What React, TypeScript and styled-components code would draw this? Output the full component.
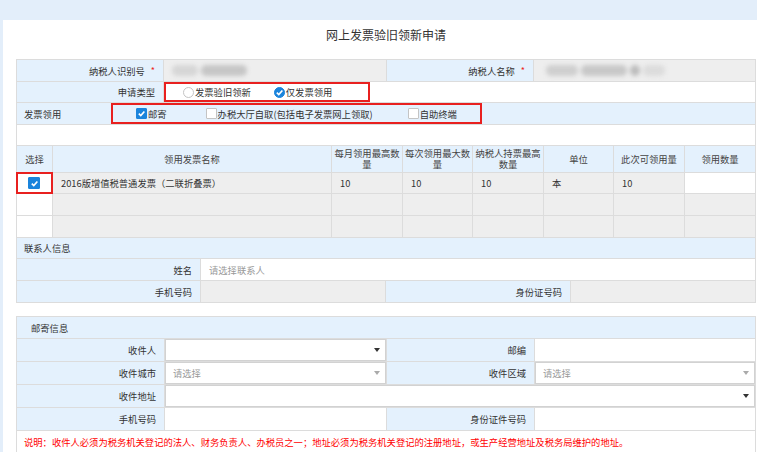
import React from 'react'
import styled, { createGlobalStyle } from 'styled-components'

const GlobalStyle = createGlobalStyle`
  html, body {
    margin: 0;
    padding: 0;
    background: #e3eefa;
    font-family: "Noto Sans CJK SC", "Liberation Sans", sans-serif;
    font-size: 9.3px;
    color: #333;
  }
`

const Page = styled.div`
  margin: 20px 0 0 3px;
  background: #fff;
  padding: 0 1px 0 13px;
  min-height: 432px;
`

const Title = styled.div`
  height: 39px;
  line-height: 30px;
  text-align: center;
  font-size: 12px;
  color: #333;
`

// a bordered block of cells; the 1px gaps on the grey background draw the cell lines
const Section = styled.div<{ $cols: string; $rows: string; $top?: boolean; $gap?: number }>`
  display: grid;
  grid-template-columns: ${p => p.$cols};
  grid-template-rows: ${p => p.$rows};
  gap: 1px;
  background: #dcdcdc;
  border: 1px solid #dcdcdc;
  border-top-width: ${p => (p.$top ? 1 : 0)}px;
  margin-top: ${p => p.$gap || 0}px;
  box-sizing: border-box;
`

const Label = styled.div<{ $left?: boolean; $pad?: number; $span?: number }>`
  grid-column: span ${p => p.$span || 1};
  background: #e4f1fd;
  display: flex;
  align-items: center;
  justify-content: ${p => (p.$left ? 'flex-start' : 'flex-end')};
  padding: 0 ${p => (p.$left ? 0 : p.$pad ?? 8)}px 0 ${p => (p.$left ? p.$pad ?? 7 : 0)}px;
  white-space: nowrap;
`

const Star = styled.span`
  color: #e22;
  margin-left: 6px;
  font-size: 9px;
`

const Value = styled.div<{ $grey?: boolean; $span?: number }>`
  grid-column: span ${p => p.$span || 1};
  background: ${p => (p.$grey ? '#eeeeee' : '#fff')};
  display: flex;
  align-items: center;
  padding-left: 8px;
  white-space: nowrap;
  overflow: hidden;
`

const Head = styled.div`
  background: #e4f1fd;
  display: flex;
  align-items: center;
  justify-content: center;
  text-align: center;
  line-height: 11px;
  color: #444;
`

const Blur = styled.div<{ $ml?: number }>`
  display: flex;
  gap: 3px;
  align-items: center;
  margin-left: ${p => p.$ml || 0}px;
  filter: blur(2px);
`

const Smudge = styled.span<{ $w: number; $c?: string }>`
  display: inline-block;
  width: ${p => p.$w}px;
  height: 11px;
  background: ${p => p.$c || '#c8c8c8'};
  border-radius: 5px;
`

const RedBox = styled.div<{ $w: number; $ml?: number }>`
  display: flex;
  align-items: center;
  box-sizing: border-box;
  width: ${p => p.$w}px;
  height: 100%;
  margin-left: ${p => p.$ml || 0}px;
  border: 2px solid #e8201f;
`

const Option = styled.label<{ $ml: number }>`
  display: inline-flex;
  align-items: center;
  margin-left: ${p => p.$ml}px;
  color: #333;
`

const Box = styled.span<{ $checked?: boolean; $round?: boolean; $size?: number }>`
  display: inline-flex;
  align-items: center;
  justify-content: center;
  box-sizing: border-box;
  width: ${p => p.$size || 11}px;
  height: ${p => p.$size || 11}px;
  border-radius: ${p => (p.$round ? '50%' : '1px')};
  background: ${p => (p.$checked ? '#1a84dc' : '#fff')};
  border: 1px solid ${p => (p.$checked ? '#1a84dc' : '#c4c4c4')};
  margin-right: 1px;
`

const Check = ({ checked, round, size }: { checked?: boolean; round?: boolean; size?: number }) => (
  <Box $checked={checked} $round={round} $size={size}>
    {checked && (
      <svg width="9" height="9" viewBox="0 0 10 10">
        <path d="M2 5.2 L4.2 7.3 L8.2 2.8" stroke="#fff" strokeWidth="1.8" fill="none" />
      </svg>
    )}
  </Box>
)

const RowTitle = styled.span`
  width: 87px;
`

const PlainRow = styled.div`
  grid-column: 1 / -1;
  background: #fff;
`

const PickCell = styled.div<{ $marked?: boolean }>`
  background: #fff;
  display: flex;
  align-items: center;
  justify-content: center;
  outline: ${p => (p.$marked ? '2px solid #e8201f' : 'none')};
  outline-offset: -1px;
`

const Select = styled.div<{ $span?: number; $placeholder?: boolean }>`
  grid-column: span ${p => p.$span || 1};
  background: #fff;
  box-shadow: inset 0 0 0 1px #d2d2d2;
  display: flex;
  align-items: center;
  justify-content: space-between;
  padding: 0 6px 0 8px;
  color: ${p => (p.$placeholder ? '#999' : '#333')};
`

const Arrow = styled.span<{ $light?: boolean }>`
  width: 0;
  height: 0;
  border-left: 3px solid transparent;
  border-right: 3px solid transparent;
  border-top: 4px solid ${p => (p.$light ? '#aaa' : '#333')};
`

const Placeholder = styled.span`
  color: #999;
`

const Note = styled.div`
  grid-column: 1 / -1;
  background: #fff;
  color: #f00;
  display: flex;
  align-items: center;
  padding-left: 7px;
  white-space: nowrap;
`

const heads = ['选择', '领用发票名称', '每月领用最高数量', '每次领用最大数量', '纳税人持票最高数量', '单位', '此次可领用量', '领用数量']

const invoiceRows = [
  { name: '2016版增值税普通发票（二联折叠票）', month: '10', each: '10', hold: '10', unit: '本', can: '10' },
  null,
  null,
]

export default function App() {
  return (
    <>
      <GlobalStyle />
      <Page>
        <Title>网上发票验旧领新申请</Title>

        <Section $top $cols="146px 222px 146px 221px" $rows="21px 20px 21px 20px">
          <Label>纳税人识别号<Star>*</Star></Label>
          <Value $grey>
            <Blur>
              <Smudge $w={26} $c="#d6d6d6" />
              <Smudge $w={46} $c="#c6c6c6" />
            </Blur>
          </Value>
          <Label>纳税人名称<Star>*</Star></Label>
          <Value $grey>
            <Blur $ml={4}>
              <Smudge $w={32} $c="#cfcfcf" />
              <Smudge $w={46} $c="#c8c8c8" />
              <Smudge $w={10} $c="#bdbdbd" />
              <Smudge $w={22} $c="#dcdcdc" />
            </Blur>
          </Value>

          <Label>申请类型</Label>
          <Value $span={3} style={{ paddingLeft: 0 }}>
            <RedBox $w={206}>
              <Option $ml={17}><Check round />发票验旧领新</Option>
              <Option $ml={23}><Check round checked />仅发票领用</Option>
            </RedBox>
          </Value>

          <Label $span={4} $left>
            <RowTitle>发票领用</RowTitle>
            <RedBox $w={371}>
              <Option $ml={23}><Check checked />邮寄</Option>
              <Option $ml={39}><Check />办税大厅自取(包括电子发票网上领取)</Option>
              <Option $ml={35}><Check />自助终端</Option>
            </RedBox>
          </Label>

          <PlainRow />
        </Section>

        <Section $cols="35px 278px 70px 69px 70px 69px 70px 70px" $rows="26px 20px 21px 21px">
          {heads.map(h => (
            <Head key={h}>{h}</Head>
          ))}
          {invoiceRows.map((r, i) => (
            <React.Fragment key={i}>
              <PickCell $marked={!!r}>{r && <Check checked size={12} />}</PickCell>
              <Value $grey>{r?.name}</Value>
              <Value $grey>{r?.month}</Value>
              <Value $grey>{r?.each}</Value>
              <Value $grey>{r?.hold}</Value>
              <Value $grey>{r?.unit}</Value>
              <Value $grey>{r?.can}</Value>
              <Value $grey={!r} />
            </React.Fragment>
          ))}
        </Section>

        <Section $cols="183px 184px 184px 184px" $rows="20px 21px 21px">
          <Label $span={4} $left>联系人信息</Label>
          <Label>姓名</Label>
          <Value $span={3}><Placeholder>请选择联系人</Placeholder></Value>
          <Label>手机号码</Label>
          <Value $grey />
          <Label>身份证号码</Label>
          <Value $grey />
        </Section>

        <Section $top $gap={13} $cols="147px 221px 147px 220px" $rows="21px 22px 22px 22px 22px 21px">
          <Label $span={4} $left $pad={14}>邮寄信息</Label>

          <Label>收件人</Label>
          <Select><span /><Arrow /></Select>
          <Label>邮编</Label>
          <Value />

          <Label>收件城市</Label>
          <Select $placeholder>请选择<Arrow $light /></Select>
          <Label>收件区域</Label>
          <Select $placeholder>请选择<Arrow $light /></Select>

          <Label>收件地址</Label>
          <Select $span={3}><span /><Arrow /></Select>

          <Label>手机号码</Label>
          <Value />
          <Label>身份证件号码</Label>
          <Value />

          <Note>
            说明：收件人必须为税务机关登记的法人、财务负责人、办税员之一；地址必须为税务机关登记的注册地址，或生产经营地址及税务局维护的地址。
          </Note>
        </Section>
      </Page>
    </>
  )
}
